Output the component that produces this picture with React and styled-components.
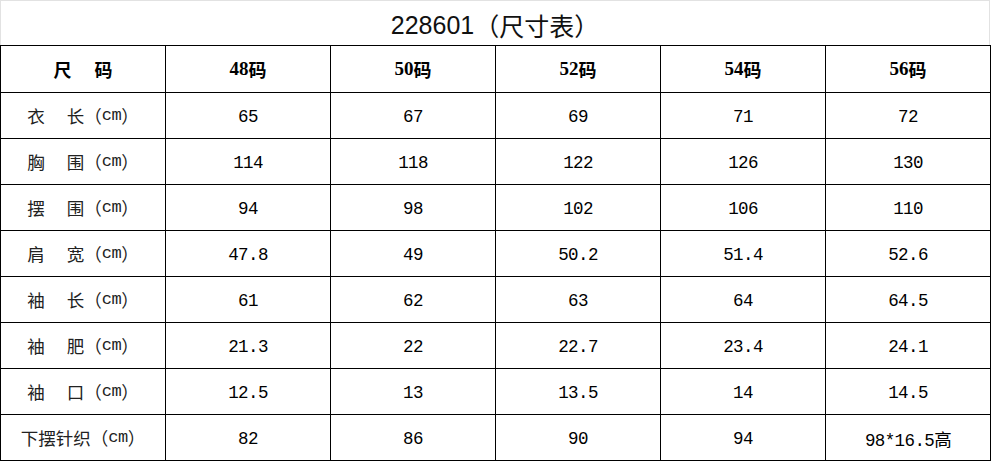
import React from "react"
import styled, { createGlobalStyle } from "styled-components"

const sizes = ["48码", "50码", "52码", "54码", "56码"]

const rows = [
  { name: ["衣", "长"], values: ["65", "67", "69", "71", "72"] },
  { name: ["胸", "围"], values: ["114", "118", "122", "126", "130"] },
  { name: ["摆", "围"], values: ["94", "98", "102", "106", "110"] },
  { name: ["肩", "宽"], values: ["47.8", "49", "50.2", "51.4", "52.6"] },
  { name: ["袖", "长"], values: ["61", "62", "63", "64", "64.5"] },
  { name: ["袖", "肥"], values: ["21.3", "22", "22.7", "23.4", "24.1"] },
  { name: ["袖", "口"], values: ["12.5", "13", "13.5", "14", "14.5"] },
  { name: ["下摆针织"], values: ["82", "86", "90", "94", "98*16.5高"] },
]

const App = () => {
  return (
    <>
      <GlobalStyle />
      <Page>
        <Title>
          228601<Cjk>（尺寸表）</Cjk>
        </Title>
        <Table>
          <HeadCell>
            尺<Gap $w={23} />码
          </HeadCell>
          {sizes.map(s => (
            <HeadCell key={s}>
              <HeadNum>{s.replace("码", "")}</HeadNum>码
            </HeadCell>
          ))}
          {rows.map(row => (
            <React.Fragment key={row.name.join("")}>
              <LabelCell>
                {row.name.length > 1 ? (
                  <>
                    {row.name[0]}
                    <Gap $w={22} />
                    {row.name[1]}
                  </>
                ) : (
                  row.name[0]
                )}
                （<Unit>cm</Unit>）
              </LabelCell>
              {row.values.map((v, i) => (
                <Cell key={i}>{v}</Cell>
              ))}
            </React.Fragment>
          ))}
        </Table>
      </Page>
    </>
  )
}

export default App

const GlobalStyle = createGlobalStyle`
  html, body {
    margin: 0;
    padding: 0;
    background: #fff;
  }
`

const Page = styled.div`
  width: 991px;
  height: 461px;
  overflow: hidden;
  color: #000;
`

const Title = styled.div`
  box-sizing: border-box;
  width: 990px;
  height: 45px;
  border: 1px solid #e2e2e2;
  border-bottom: none;
  display: flex;
  align-items: center;
  justify-content: center;
  padding-top: 4px;
  font-family: "Liberation Sans", "Noto Sans CJK SC", sans-serif;
  font-size: 25px;
  color: #111;
`

const Cjk = styled.span`
  font-family: "Noto Sans CJK SC", sans-serif;
  font-size: 25px;
`

const Table = styled.div`
  display: grid;
  grid-template-columns: repeat(6, 165px);
  grid-template-rows: 47px repeat(8, 46px);
  border-top: 1px solid #000;
  border-left: 1px solid #000;
  width: 991px;
  box-sizing: border-box;
`

const Cell = styled.div`
  box-sizing: border-box;
  border-right: 1px solid #000;
  border-bottom: 1px solid #000;
  display: flex;
  align-items: center;
  justify-content: center;
  padding-top: 2px;
  font-family: "Liberation Mono", "Noto Sans CJK SC", monospace;
  font-size: 17.5px;
  letter-spacing: -0.6px;
  white-space: nowrap;
`

const HeadCell = styled(Cell)`
  padding-top: 0;
  letter-spacing: 0;
  font-family: "Noto Sans CJK SC", sans-serif;
  font-size: 18px;
  font-weight: 700;
`

const HeadNum = styled.span`
  font-family: "Liberation Serif", serif;
  font-weight: 700;
  font-size: 19px;
`

const LabelCell = styled(Cell)`
  padding-top: 0;
  letter-spacing: 0;
  font-family: "Noto Sans CJK SC", sans-serif;
  font-size: 17.5px;
  font-weight: 400;
  color: #222;
`

const Unit = styled.span`
  font-family: "Liberation Mono", monospace;
  font-size: 17px;
  letter-spacing: -0.5px;
`

const Gap = styled.span`
  display: inline-block;
  width: ${p => p.$w}px;
`
